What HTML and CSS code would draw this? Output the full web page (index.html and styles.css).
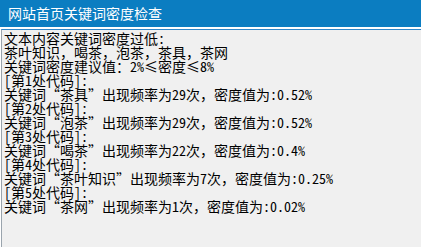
FILE: index.html
```html
<!DOCTYPE html>
<html lang="zh-CN">
<head>
<meta charset="utf-8">
<title>网站首页关键词密度检查</title>
<link rel="stylesheet" href="styles.css">
</head>
<body>
<div class="titlebar">网站首页关键词密度检查</div>
<div class="content">
<div class="line">文本内容关键词密度过低<span class="h">:</span></div>
<div class="line">茶叶知识，喝茶，泡茶，茶具，茶网</div>
<div class="line">关键词密度建议值：<span class="h">2%</span>≤密度≤<span class="h">8%</span></div>
<div class="line"><span class="h">[</span>第<span class="h">1</span>处代码<span class="h">]:</span></div>
<div class="line">关键词“茶具”出现频率为<span class="h">29</span>次，密度值为<span class="h">:0.52%</span></div>
<div class="line"><span class="h">[</span>第<span class="h">2</span>处代码<span class="h">]:</span></div>
<div class="line">关键词“泡茶”出现频率为<span class="h">29</span>次，密度值为<span class="h">:0.52%</span></div>
<div class="line"><span class="h">[</span>第<span class="h">3</span>处代码<span class="h">]:</span></div>
<div class="line">关键词“喝茶”出现频率为<span class="h">22</span>次，密度值为<span class="h">:0.4%</span></div>
<div class="line"><span class="h">[</span>第<span class="h">4</span>处代码<span class="h">]:</span></div>
<div class="line">关键词“茶叶知识”出现频率为<span class="h">7</span>次，密度值为<span class="h">:0.25%</span></div>
<div class="line"><span class="h">[</span>第<span class="h">5</span>处代码<span class="h">]:</span></div>
<div class="line">关键词“茶网”出现频率为<span class="h">1</span>次，密度值为<span class="h">:0.02%</span></div>
</div>
</body>
</html>
```
FILE: styles.css
```css
html, body {
  margin: 0;
  padding: 0;
  height: 100%;
  background: #ffffff;
}
body {
  display: flex;
  flex-direction: column;
  font-family: "Noto Sans CJK SC", "Noto Sans", sans-serif;
}
.titlebar {
  height: 27px;
  flex: none;
  box-sizing: border-box;
  padding-left: 8px;
  background: #0b7dc1;
  color: #ffffff;
  font-size: 14px;
  line-height: 27px;
}
.content {
  flex: 1;
  margin-top: 2px;
  margin-left: 1px;
  border-top: 1px solid #2f86c9;
  border-left: 1px solid #9aa4ad;
  background: #f0f0f0;
  padding: 1px 0 0 2px;
  color: #000000;
  font-size: 14px;
  line-height: 14px;
  white-space: nowrap;
}
.line {
  height: 14px;
}
.h {
  font-feature-settings: "hwid" 1;
}
```
